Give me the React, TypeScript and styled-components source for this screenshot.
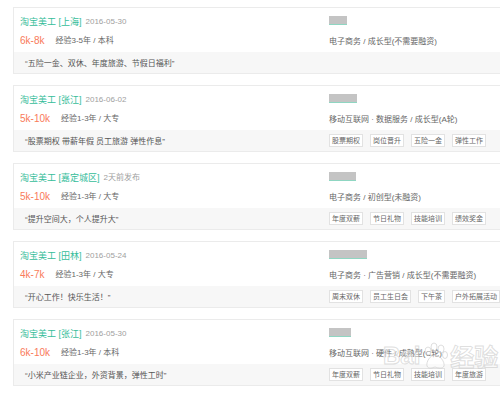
import styled, { createGlobalStyle } from "styled-components";

const GlobalStyle = createGlobalStyle`
  html, body {
    margin: 0;
    padding: 0;
    background: #fff;
    overflow: hidden;
  }
  body {
    font-family: "Liberation Sans", "Noto Sans CJK SC", sans-serif;
  }
`;

const Page = styled.div`
  position: relative;
  width: 500px;
  height: 393px;
  overflow: hidden;
`;

const List = styled.div`
  display: flex;
  flex-direction: column;
  gap: 11px;
  padding: 7px 0 0 13px;
`;

const Card = styled.div`
  width: 520px;
  border: 1px solid #ebebeb;
  background: #fff;
`;

const Top = styled.div`
  box-sizing: border-box;
  height: 44px;
  display: grid;
  grid-template-columns: 309px 1fr;
  padding: 7px 0 0 6px;
`;

const Col = styled.div`
  display: flex;
  flex-direction: column;
`;

const Row = styled.div<{ $gap?: number }>`
  display: flex;
  align-items: center;
  height: 14px;
  margin-top: ${(p) => p.$gap ?? 0}px;
  white-space: nowrap;
  line-height: 1;
`;

const Title = styled.span`
  font-size: 9px;
  color: #36bd9a;
`;

const Date = styled.span`
  font-size: 8px;
  color: #a0a0a0;
  margin-left: 4px;
`;

const Salary = styled.span`
  font-size: 10px;
  color: #f97b5a;
`;

const Exp = styled.span`
  font-size: 8px;
  color: #666;
  margin-left: 11px;
`;

const NameBlur = styled.div<{ $w: number }>`
  width: ${(p) => p.$w}px;
  height: 8px;
  margin-top: 1px;
  background: #c4c4c4;
  border-bottom: 1px solid #8fd6c2;
  filter: blur(0.6px);
`;

const Industry = styled.span`
  font-size: 8px;
  color: #666;
`;

const Band = styled.div`
  display: grid;
  grid-template-columns: 304px 1fr;
  align-items: center;
  height: 21px;
  padding-left: 11px;
  background: #f7f7f7;
`;

const Quote = styled.span`
  font-size: 8px;
  color: #555;
  white-space: nowrap;
`;

const Tags = styled.div`
  display: flex;
  gap: 7px;
`;

const Tag = styled.span`
  font-size: 7px;
  line-height: 11px;
  padding: 0 2px;
  border: 1px solid #e2e2e2;
  background: #fff;
  color: #666;
  white-space: nowrap;
`;

const Watermark = styled.div`
  position: absolute;
  left: 383px;
  top: 338px;
  display: flex;
  align-items: center;
  gap: 2px;
  font-size: 24px;
  font-weight: bold;
  color: rgba(255, 255, 255, 0.35);
  -webkit-text-stroke: 1px rgba(195, 195, 195, 0.55);
  pointer-events: none;
`;

const jobs = [
  {
    title: "淘宝美工 [上海]",
    date: "2016-05-30",
    salary: "6k-8k",
    exp: "经验3-5年 / 本科",
    nameW: 18,
    industry: "电子商务 / 成长型(不需要融资)",
    quote: "“五险一金、双休、年度旅游、节假日福利”",
    tags: [] as string[],
  },
  {
    title: "淘宝美工 [张江]",
    date: "2016-06-02",
    salary: "5k-10k",
    exp: "经验1-3年 / 大专",
    nameW: 28,
    industry: "移动互联网 · 数据服务 / 成长型(A轮)",
    quote: "“股票期权 带薪年假 员工旅游 弹性作息”",
    tags: ["股票期权", "岗位晋升", "五险一金", "弹性工作"],
  },
  {
    title: "淘宝美工 [嘉定城区]",
    date: "2天前发布",
    salary: "5k-10k",
    exp: "经验1-3年 / 大专",
    nameW: 27,
    industry: "电子商务 / 初创型(未融资)",
    quote: "“提升空间大，个人提升大”",
    tags: ["年度双薪", "节日礼物", "技能培训", "绩效奖金"],
  },
  {
    title: "淘宝美工 [田林]",
    date: "2016-05-24",
    salary: "4k-7k",
    exp: "经验1-3年 / 大专",
    nameW: 38,
    industry: "电子商务 · 广告营销 / 成长型(不需要融资)",
    quote: "“开心工作！快乐生活！”",
    tags: ["周末双休", "员工生日会", "下午茶", "户外拓展活动"],
  },
  {
    title: "淘宝美工 [张江]",
    date: "2016-05-30",
    salary: "6k-10k",
    exp: "经验1-3年 / 本科",
    nameW: 22,
    industry: "移动互联网 · 硬件 / 成熟型(C轮)",
    quote: "“小米产业链企业，外资背景，弹性工时”",
    tags: ["年度双薪", "节日礼物", "技能培训", "年度旅游"],
  },
];

export default function App() {
  return (
    <Page>
      <GlobalStyle />
      <List>
        {jobs.map((job, i) => (
          <Card key={i}>
            <Top>
              <Col>
                <Row>
                  <Title>{job.title}</Title>
                  <Date>{job.date}</Date>
                </Row>
                <Row $gap={5}>
                  <Salary>{job.salary}</Salary>
                  <Exp>{job.exp}</Exp>
                </Row>
              </Col>
              <Col>
                <NameBlur $w={job.nameW} />
                <Row $gap={10}>
                  <Industry>{job.industry}</Industry>
                </Row>
              </Col>
            </Top>
            <Band>
              <Quote>{job.quote}</Quote>
              <Tags>
                {job.tags.map((t) => (
                  <Tag key={t}>{t}</Tag>
                ))}
              </Tags>
            </Band>
          </Card>
        ))}
      </List>
      <Watermark>
        <span>Bai</span>
        <svg width="26" height="28" viewBox="0 0 26 28">
          <g fill="rgba(255,255,255,0.35)" stroke="rgba(195,195,195,0.55)" strokeWidth="1">
            <ellipse cx="6" cy="9" rx="3" ry="4" />
            <ellipse cx="12" cy="5" rx="3" ry="4" />
            <ellipse cx="19" cy="7" rx="3" ry="4" />
            <ellipse cx="23" cy="13" rx="2.5" ry="3.5" />
            <path d="M13 13 C8 13 4 20 5 24 C6 27 10 26 13 25 C16 26 21 27 22 24 C23 20 18 13 13 13 Z" />
          </g>
        </svg>
        <span>经验</span>
      </Watermark>
    </Page>
  );
}
